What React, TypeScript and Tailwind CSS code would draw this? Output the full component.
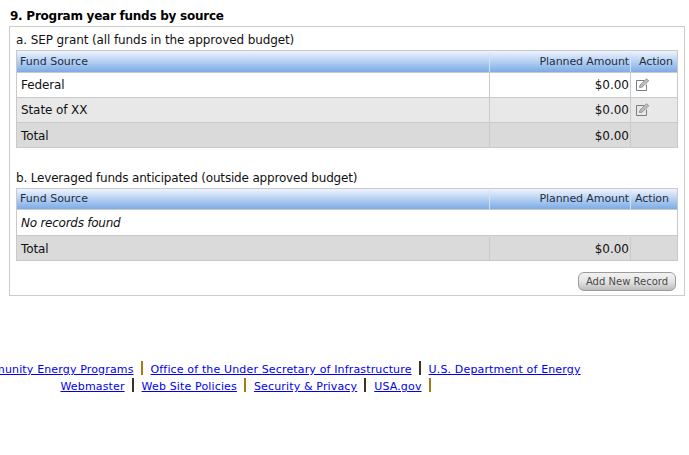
const cellLine = 'border-[#c9c9c9]'

function EditIcon() {
  return (
    <svg width="14" height="14" viewBox="0 0 14 14" fill="none" aria-hidden="true">
      <path d="M8.5 2.5H0.5V12.5H10.5V6.5" stroke="#7d7d7d" strokeWidth="1" />
      <path d="M3.5 9.5L4 7L10.5 0.8L12.8 2.8L6 9.2Z" fill="#bdbdbd" stroke="#858585" strokeWidth="0.8" />
    </svg>
  )
}

function HeaderRow({ rowClass, actionClass }: { rowClass: string; actionClass: string }) {
  return (
    <div className={`grid grid-cols-[472px_141px_1fr] items-center border-b ${cellLine} bg-linear-to-b from-[#eef4fd] to-[#7dabe6] pt-[1px] text-[11px] text-[#1f2f3f] ${rowClass}`}>
      <div className="pl-[3px]">Fund Source</div>
      <div className="flex h-full items-center justify-end border-l border-[#d5e1f2] pr-[1px] tracking-[-0.1px]">Planned Amount</div>
      <div className={`flex h-full items-center border-l border-[#d5e1f2] tracking-[-0.1px] ${actionClass}`}>Action</div>
    </div>
  )
}

function DataRow({ label, shaded }: { label: string; shaded?: boolean }) {
  return (
    <div className={`grid h-[25px] grid-cols-[472px_141px_1fr] items-center border-b ${cellLine} text-[12px] ${shaded ? 'bg-[#e8e8e8]' : 'bg-white'}`}>
      <div className="pl-[4px] tracking-[-0.1px]">{label}</div>
      <div className={`flex h-full items-center justify-end border-l ${cellLine} pr-[1px]`}>$0.00</div>
      <div className={`flex h-full items-center border-l ${cellLine} pl-[5px]`}>
        <EditIcon />
      </div>
    </div>
  )
}

function TotalRow() {
  return (
    <div className="grid h-[24px] grid-cols-[472px_141px_1fr] items-center bg-[#dadada] pt-[1px] text-[12px]">
      <div className="pl-[4px] tracking-[-0.1px]">Total</div>
      <div className="flex h-full items-center justify-end border-l border-[#c9c9c9] pr-[1px]">$0.00</div>
      <div className="h-full border-l border-[#c9c9c9]" />
    </div>
  )
}

function Sep({ gold }: { gold?: boolean }) {
  return <span className={`mr-[8px] ml-[7px] inline-block h-[14px] w-[2px] align-[-2px] ${gold ? 'bg-[#a87a14]' : 'bg-[#3a3320]'}`} />
}

const linkClass = 'text-[#0000ee] underline'

export default function App() {
  return (
    <div className="h-[455px] w-[689px] overflow-hidden bg-white font-['DejaVu_Sans',sans-serif] text-[#111]">
      <div className="px-[9px] pt-[8px]">
        <h2 className="pl-[1px] pt-[1px] text-[12px] leading-[14px] font-bold tracking-[-0.25px] text-black">9. Program year funds by source</h2>
        <div className="mt-[3px] h-[270px] w-[676px] border border-[#cccccc] px-[6px] pt-[5px]">
          <div className="text-[12px] leading-[16px] tracking-[-0.1px]">a. SEP grant (all funds in the approved budget)</div>
          <div className={`mt-[2px] border ${cellLine}`}>
            <HeaderRow rowClass="h-[22px]" actionClass="pl-[8px]" />
            <DataRow label="Federal" />
            <DataRow label="State of XX" shaded />
            <TotalRow />
          </div>
          <div className="mt-[22px] text-[12px] leading-[16px] tracking-[-0.18px]">b. Leveraged funds anticipated (outside approved budget)</div>
          <div className={`mt-[2px] border ${cellLine}`}>
            <HeaderRow rowClass="h-[21px]" actionClass="pl-[4px]" />
            <div className={`flex h-[26px] items-center border-b ${cellLine} pl-[4px] text-[12px] tracking-[-0.25px] italic`}>No records found</div>
            <TotalRow />
          </div>
          <div className="mt-[11px] flex justify-end pr-[2px]">
            <button
              type="button"
              className="flex h-[19px] w-[98px] items-center justify-center rounded-[6px] border border-[#9c9c9c] bg-linear-to-b from-[#f2f2f2] via-[#e4e4e4] to-[#bdbdbd] text-[10px] text-[#4a4a4a]"
            >
              Add New Record
            </button>
          </div>
        </div>
      </div>

      <div className="mt-[65px] flex w-[499px] flex-col items-center text-[11px] leading-[17px] tracking-[0.15px] whitespace-nowrap">
        <div className="ml-[50px]">
          <a className={linkClass}>Community Energy Programs</a>
          <Sep gold />
          <a className={linkClass}>Office of the Under Secretary of Infrastructure</a>
          <Sep />
          <a className={linkClass}>U.S. Department of Energy</a>
        </div>
        <div>
          <a className={linkClass}>Webmaster</a>
          <Sep />
          <a className={linkClass}>Web Site Policies</a>
          <Sep gold />
          <a className={linkClass}>Security &amp; Privacy</a>
          <Sep />
          <a className={linkClass}>USA.gov</a>
          <Sep gold />
        </div>
      </div>
    </div>
  )
}
